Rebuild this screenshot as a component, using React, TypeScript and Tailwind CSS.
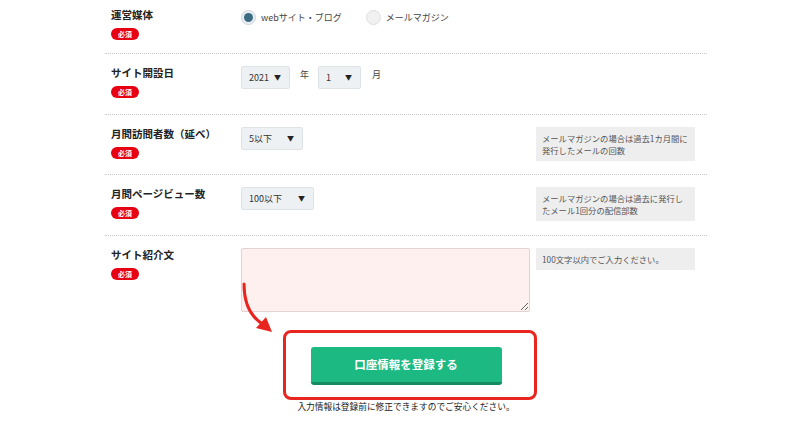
import type { ReactNode } from 'react'

const jp = '"Noto Sans CJK JP", "Noto Sans", sans-serif'

function Badge() {
  return (
    <span className="mt-[6px] flex h-[12px] w-[28px] items-center justify-center rounded-full bg-[#e60012] text-[7px] font-bold leading-none text-white">
      必須
    </span>
  )
}

function Label({ text }: { text: string }) {
  return (
    <div className="flex w-[136px] shrink-0 flex-col items-start pl-[6px]">
      <span className="text-[10.5px] font-bold leading-[14px] text-[#222]">{text}</span>
      <Badge />
    </div>
  )
}

function FakeSelect({ value, width }: { value: string; width: string }) {
  return (
    <div
      className={`flex h-[23px] ${width} items-center justify-between rounded-[2px] border border-[#dde3e7] bg-[#edf1f4] pl-[7px] pr-[8px] text-[9px] text-[#333]`}
    >
      <span>{value}</span>
      <span className="text-[7px] text-[#222]">▼</span>
    </div>
  )
}

function Hint({ children }: { children: ReactNode }) {
  return (
    <div className="w-[159px] shrink-0 self-start bg-[#eeeeee] px-[6px] py-[5px] text-[8.3px] leading-[12px] text-[#555]">
      {children}
    </div>
  )
}

function Row({
  label,
  height,
  top = 'pt-[12px]',
  border = true,
  children,
  hint,
}: {
  label: string
  height?: string
  top?: string
  border?: boolean
  children: ReactNode
  hint?: ReactNode
}) {
  return (
    <div
      className={`flex items-start ${height ?? ''} ${top} ${border ? 'border-b border-dotted border-[#c8c8c8]' : ''}`}
    >
      <Label text={label} />
      <div className="flex w-[295px] shrink-0 items-start">{children}</div>
      {hint}
    </div>
  )
}

export default function App() {
  return (
    <div className="relative h-[428px] w-[800px] overflow-hidden bg-white" style={{ fontFamily: jp }}>
      <div className="ml-[105px] w-[602px]">
        <Row label="運営媒体" height="h-[54px]" top="pt-[8px]">
          <div className="mt-[2px] flex items-center text-[9px] text-[#444]">
            <span className="flex h-[15px] w-[15px] items-center justify-center rounded-full border border-[#c9d6de] bg-[#e9eff3]">
              <span className="h-[9px] w-[9px] rounded-full bg-[#3b6c81]" />
            </span>
            <span className="ml-[5px]">webサイト・ブログ</span>
            <span className="ml-[24px] h-[15px] w-[15px] rounded-full border border-[#dedede] bg-[#f1f1f1]" />
            <span className="ml-[5px]">メールマガジン</span>
          </div>
        </Row>

        <Row label="サイト開設日" height="h-[61px]">
          <div className="flex items-start text-[9px] text-[#444]">
            <FakeSelect value="2021" width="w-[49px]" />
            <span className="ml-[10px] mt-[2px]">年</span>
            <span className="ml-[9px]">
              <FakeSelect value="1" width="w-[43px]" />
            </span>
            <span className="ml-[11px] mt-[2px]">月</span>
          </div>
        </Row>

        <Row
          label="月間訪問者数（延べ）"
          height="h-[60px]"
          hint={
            <Hint>
              メールマガジンの場合は過去1カ月間に
              <br />
              発行したメールの回数
            </Hint>
          }
        >
          <FakeSelect value="5以下" width="w-[62px]" />
        </Row>

        <Row
          label="月間ページビュー数"
          height="h-[61px]"
          hint={
            <Hint>
              メールマガジンの場合は過去に発行し
              <br />
              たメール1回分の配信部数
            </Hint>
          }
        >
          <FakeSelect value="100以下" width="w-[73px]" />
        </Row>

        <Row label="サイト紹介文" border={false} hint={<Hint>100文字以内でご入力ください。</Hint>}>
          <textarea className="h-[64px] w-[289px] rounded-[2px] border border-[#e3d3d3] bg-[#fdf0ef] outline-none" />
        </Row>

        <div className="mt-[35px] flex flex-col items-center">
          <div className="relative">
            <div className="pointer-events-none absolute -bottom-[15px] -left-[28px] -right-[35px] -top-[17px] rounded-[8px] border-[3px] border-[#e8251f]" />
            <button className="flex h-[38px] w-[191px] items-center justify-center rounded-[3px] border-b-[3px] border-[#138a60] bg-[#1db983] text-[11.5px] font-bold text-white">
              口座情報を登録する
            </button>
          </div>
          <p className="mt-[16px] text-[8.7px] leading-[12px] text-[#222]">
            入力情報は登録前に修正できますのでご安心ください。
          </p>
        </div>
      </div>

      <svg className="pointer-events-none absolute left-[230px] top-[275px]" width="60" height="65" viewBox="0 0 60 65">
        <path d="M14 9 C 14 28, 20 42, 34 50" fill="none" stroke="#e8251f" strokeWidth="3" strokeLinecap="round" />
        <path d="M42 57 L 26 53 L 36 42 Z" fill="#e8251f" />
      </svg>
    </div>
  )
}
